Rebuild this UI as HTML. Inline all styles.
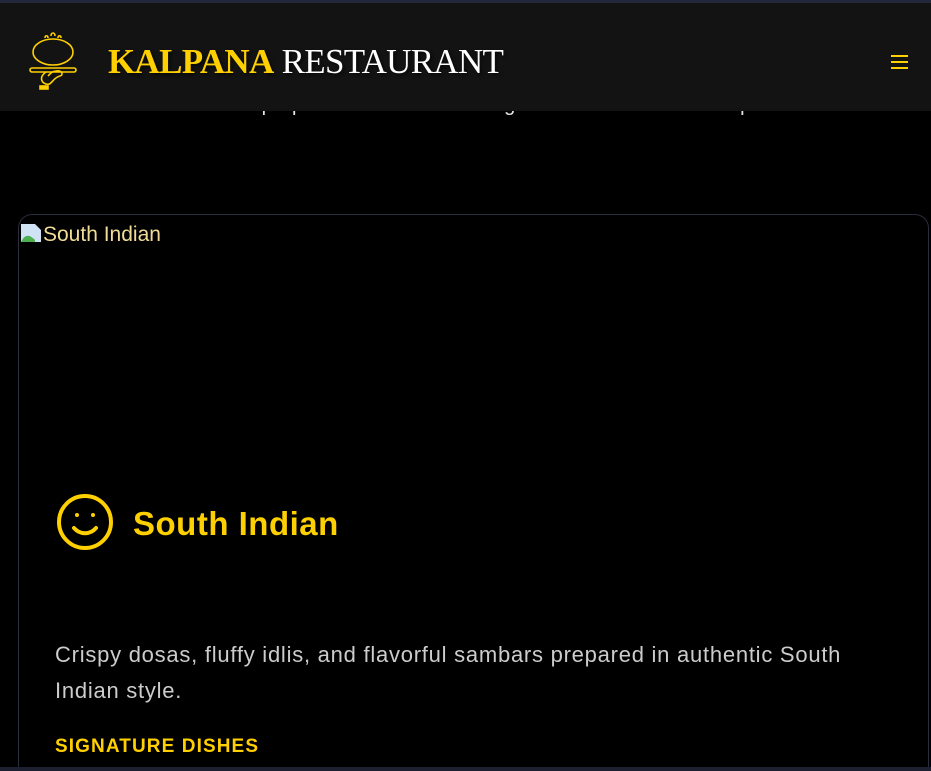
<!DOCTYPE html>
<html><head><meta charset="utf-8"><style>
*{margin:0;padding:0;box-sizing:border-box}
html,body{width:931px;height:771px;overflow:hidden;background:#000;font-family:"Liberation Sans",sans-serif}
.top{position:absolute;left:0;top:0;width:931px;height:3px;background:#22283a}
.behind{position:absolute;left:0;top:88px;width:931px;text-align:center;color:#e6e6e6;font-size:20px;line-height:34px;letter-spacing:0.5px}
header{position:absolute;left:0;top:3px;width:931px;height:108px;background:#131313}
.brand{position:absolute;left:108px;top:39px;font-family:"Liberation Serif",serif;font-size:35px;letter-spacing:-0.7px;line-height:40px;text-shadow:2px 2px 3px rgba(0,0,0,.6)}
.brand b{color:#ffd000}
.brand span{color:#fff}
.menu{position:absolute;left:891px;top:52px;width:17px}
.menu i{display:block;height:2px;background:#ffd000;margin-bottom:4px}
.card{position:absolute;left:18px;top:214px;width:911px;height:555px;border:1px solid #2a2e3c;border-bottom:none;border-radius:14px 14px 0 0}
.bot{position:absolute;left:0;top:767px;width:931px;height:4px;background:#1c2030}
.img{position:absolute;left:19px;top:216px;color:#f0dc96;font-size:21px;line-height:38px;display:flex;align-items:center}
.h{position:absolute;left:133px;top:503px;color:#ffd000;font-weight:bold;font-size:33px;line-height:42px;letter-spacing:0.5px}
.p{position:absolute;left:55px;top:637px;width:820px;color:#ccc;font-size:22px;line-height:36px;letter-spacing:0.75px}
.sig{position:absolute;left:55px;top:736px;color:#ffd000;font-weight:bold;font-size:19px;letter-spacing:1.1px}
</style></head><body>
<div class="behind">Each dish is prepared with the finest ingredients and authentic spices</div>
<div class="top"></div>
<header>
<svg style="position:absolute;left:26px;top:27px" width="54" height="64" viewBox="0 0 54 64" fill="none" stroke="#ffd000" stroke-width="1.6">
<ellipse cx="27" cy="22" rx="20" ry="13"/>
<path d="M19 8c0-3 3-3 3 0M25 6c0-4 4-4 4 0M32 8c0-3 3-3 3 0"/>
<rect x="4" y="38" width="46" height="4" rx="2"/>
<path d="M20 42c-6 4-6 10 0 12c6 2 6-6 14-8c4-1 2-6-4-5c-4 0-6 3-8 5"/>
<rect x="14" y="56" width="8" height="3" fill="#ffd000"/>
</svg>
<div class="brand"><b>KALPANA</b> <span>RESTAURANT</span></div>
<div class="menu"><i></i><i></i><i></i></div>
</header>
<div class="card"></div>
<div class="bot"></div>
<div class="img"><svg width="24" height="26" viewBox="0 0 24 26"><path d="M2 2h14l6 6v12H2z" fill="#cfe3f5"/><path d="M2 20c4-8 8-8 14-2v2z" fill="#4caf50"/></svg><span>South Indian</span></div>
<svg style="position:absolute;left:56px;top:493px" width="58" height="58" viewBox="0 0 58 58" fill="none" stroke="#ffd000" stroke-width="4"><circle cx="29" cy="29" r="26"/><path d="M18 35c6 7 16 7 22 0" stroke-linecap="round"/><circle cx="21" cy="22" r="2" fill="#ffd000" stroke="none"/><circle cx="37" cy="22" r="2" fill="#ffd000" stroke="none"/></svg>
<div class="h">South Indian</div>
<div class="p">Crispy dosas, fluffy idlis, and flavorful sambars prepared in authentic South Indian style.</div>
<div class="sig">SIGNATURE DISHES</div>
</body></html>
